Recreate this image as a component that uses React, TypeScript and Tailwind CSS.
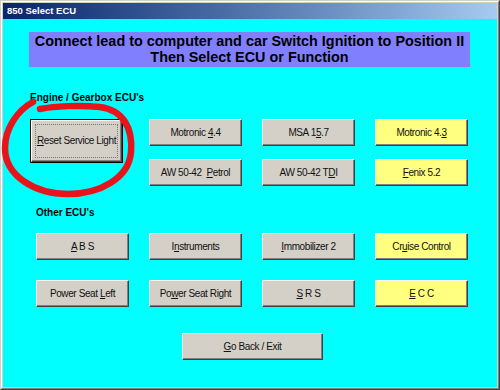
import React from "react";

const F = "font-['Liberation_Sans',Arial,sans-serif]";

function Btn({ children, yellow }: { children: React.ReactNode; yellow?: boolean }) {
  return (
    <div
      className={
        (yellow ? "bg-[#ffff80] " : "bg-[#d4d0c8] ") +
        "flex h-[27px] w-[93px] items-center justify-center whitespace-pre border border-t-white border-l-white border-r-[#404040] border-b-[#404040] shadow-[inset_-1px_-1px_0_#808080] text-[10px] leading-none tracking-[-0.4px] text-[#111]"
      }
    >
      <span>{children}</span>
    </div>
  );
}

export default function App() {
  return (
    <div className={"relative h-[390px] w-[500px] overflow-hidden bg-[#d4d0c8] " + F}>
      <div className="h-full w-full border border-t-[#d4d0c8] border-l-[#d4d0c8] border-r-[#404040] border-b-[#404040]">
        <div className="flex h-full w-full flex-col border border-t-white border-l-white border-r-[#808080] border-b-[#808080] p-px">
          <div className="flex h-[16px] shrink-0 items-center bg-gradient-to-r from-[#0a246a] to-[#a6caf0] pl-[4px] text-[9.5px] font-bold text-white">
            850 Select ECU
          </div>
          <div className="flex flex-1 flex-col bg-[#00ffff]">
            <div className="ml-[26px] mt-[13px] w-[441px] bg-[#8080ff] pb-[2px] pt-[1px] text-center text-[14.4px] font-bold leading-[16px] text-black">
              <div className="whitespace-nowrap">Connect lead to computer and car Switch Ignition to Position II</div>
              <div>Then Select ECU or Function</div>
            </div>
            <div className="ml-[27px] mt-[25px] text-[10px] font-bold leading-[12px] text-black">Engine / Gearbox ECU's</div>
            <div className="ml-[33px] mt-[15px] grid grid-cols-[93px_93px_93px_93px] grid-rows-[27px_27px] gap-x-[20px] gap-y-[13px]">
              <div className="row-span-2 -ml-[6px] h-[44px] w-[93px] self-start border border-black">
                <div className="flex h-full w-full items-center justify-center border border-t-white border-l-white border-r-[#404040] border-b-[#404040] bg-[#d4d0c8] p-[3px] shadow-[inset_-1px_-1px_0_#808080]">
                  <div className="flex h-full w-full items-center justify-center whitespace-nowrap border border-dotted border-[#777] text-[10px] leading-none tracking-[-0.4px] text-[#111]">
                    <span>
                      <u>R</u>eset Service Light
                    </span>
                  </div>
                </div>
              </div>
              <Btn>
                Motronic <u>4</u>.4
              </Btn>
              <Btn>
                MSA 1<u>5</u>.7
              </Btn>
              <Btn yellow>
                Motronic 4.<u>3</u>
              </Btn>
              <Btn>
                AW 50-42  <u>P</u>etrol
              </Btn>
              <Btn>
                AW 50-42 T<u>D</u>I
              </Btn>
              <Btn yellow>
                <u>F</u>enix 5.2
              </Btn>
            </div>
            <div className="ml-[33px] mt-[21px] text-[10px] font-bold leading-[12px] text-black">Other ECU's</div>
            <div className="ml-[33px] mt-[14px] grid grid-cols-[93px_93px_93px_93px] grid-rows-[27px_27px] gap-x-[20px] gap-y-[20px]">
              <Btn>
                <u>A</u> B S
              </Btn>
              <Btn>
                I<u>n</u>struments
              </Btn>
              <Btn>
                <u>I</u>mmobilizer 2
              </Btn>
              <Btn yellow>
                Cr<u>u</u>ise Control
              </Btn>
              <Btn>
                Power Seat <u>L</u>eft
              </Btn>
              <Btn>
                Po<u>w</u>er Seat Right
              </Btn>
              <Btn>
                <u>S</u> R S
              </Btn>
              <Btn yellow>
                <u>E</u> C C
              </Btn>
            </div>
            <div className="ml-[179px] mt-[26px] flex h-[27px] w-[141px] items-center justify-center border border-t-white border-l-white border-r-[#404040] border-b-[#404040] bg-[#d4d0c8] text-[10px] leading-none tracking-[-0.4px] text-[#111] shadow-[inset_-1px_-1px_0_#808080]">
              <span>
                <u>G</u>o Back / Exit
              </span>
            </div>
          </div>
        </div>
      </div>
      <svg className="pointer-events-none absolute left-0 top-0" width="500" height="390" viewBox="0 0 500 390">
        <path
          d="M 33 102 C 18 110, 5 128, 5 148 C 5 176, 35 194, 68 194 C 100 194, 129 178, 131 152 C 133 128, 123 110, 100 107 C 80 105, 55 106, 40 109"
          fill="none"
          stroke="#e8141c"
          strokeWidth="6.5"
          strokeLinecap="round"
        />
      </svg>
    </div>
  );
}
